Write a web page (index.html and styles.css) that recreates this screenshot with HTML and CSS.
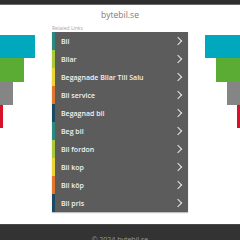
FILE: index.html
```
<!DOCTYPE html>
<html lang="en">
<head>
    <meta charset="UTF-8">
    <meta name="viewport" content="width=device-width, initial-scale=1.0">
    <title>bytebil.se</title>
    <link rel="stylesheet" href="styles.css">
</head>
<body>

<div class="topbar"></div>
<div class="title">bytebil.se</div>

<div class="main">
    <div class="side side-left">
        <div class="bar cyan"></div>
        <div class="bar green"></div>
        <div class="bar grey"></div>
        <div class="bar red"></div>
    </div>

    <div class="center">
        <div class="label">Related Links</div>
        <div class="links">
            <a class="link c-teal" href="#">Bil<span class="chev"></span></a>
            <a class="link c-lime" href="#">Bilar<span class="chev"></span></a>
            <a class="link c-yellow" href="#">Begagnade Bilar Till Salu<span class="chev"></span></a>
            <a class="link c-orange" href="#">Bil service<span class="chev"></span></a>
            <a class="link c-navy" href="#">Begagnad bil<span class="chev"></span></a>
            <a class="link c-teal" href="#">Beg bil<span class="chev"></span></a>
            <a class="link c-lime" href="#">Bil fordon<span class="chev"></span></a>
            <a class="link c-yellow" href="#">Bil kop<span class="chev"></span></a>
            <a class="link c-orange" href="#">Bil köp<span class="chev"></span></a>
            <a class="link c-navy" href="#">Bil pris<span class="chev"></span></a>
        </div>
    </div>

    <div class="side side-right">
        <div class="bar cyan"></div>
        <div class="bar green"></div>
        <div class="bar grey"></div>
        <div class="bar red"></div>
    </div>
</div>

<div class="footer">© 2024 bytebil.se</div>

</body>
</html>
```
FILE: styles.css
```
body {
    margin: 0;
    font-family: "Open Sans", "DejaVu Sans", sans-serif;
    background-color: #fff;
    overflow: hidden;
}

.topbar {
    height: 4px;
    background-color: #2e2e2e;
    border-bottom: 1px solid #6a6a6a;
}

.title {
    margin-top: 4px;
    font-size: 8.5px;
    line-height: 12px;
    color: #7a7a7a;
    text-align: center;
}

.main {
    display: flex;
}

.side {
    width: 52px;
    padding-top: 14px;
    display: flex;
    flex-direction: column;
}

.side-left {
    align-items: flex-start;
}

.side-right {
    align-items: flex-end;
}

.bar {
    height: 23px;
}

.cyan {
    width: 35px;
    background-color: #00a8bd;
}

.green {
    width: 24px;
    height: 24px;
    background-color: #5aac35;
}

.grey {
    width: 13px;
    background-color: #858585;
}

.red {
    width: 3px;
    background-color: #d8112b;
}

.center {
    width: 136px;
}

.label {
    margin-top: 4px;
    margin-bottom: 1px;
    font-size: 5px;
    line-height: 6px;
    color: #a5a5a5;
}

.links {
    background-color: #5c5c5c;
    box-shadow: 0 1px 1px rgba(0, 0, 0, 0.25);
}

.link {
    display: flex;
    align-items: center;
    justify-content: space-between;
    height: 18px;
    padding: 0 6px 0 6px;
    border-left: 3px solid #2a8a80;
    font-size: 7px;
    font-weight: 600;
    color: #f2f2f2;
    text-decoration: none;
}

.chev {
    width: 5px;
    height: 5px;
    border-top: 1px solid #e6e6e6;
    border-right: 1px solid #e6e6e6;
    transform: rotate(45deg);
    margin-right: 1px;
}

.c-teal { border-left-color: #2a8a80; }
.c-lime { border-left-color: #a9c93a; }
.c-yellow { border-left-color: #e9d433; }
.c-orange { border-left-color: #e2762b; }
.c-navy { border-left-color: #1d4a63; }

.footer {
    margin-top: 12px;
    height: 40px;
    background-color: #333;
    border-top: 1px solid #4a4a4a;
    color: #999;
    font-size: 7px;
    text-align: center;
    padding-top: 10px;
    box-sizing: border-box;
}
```
